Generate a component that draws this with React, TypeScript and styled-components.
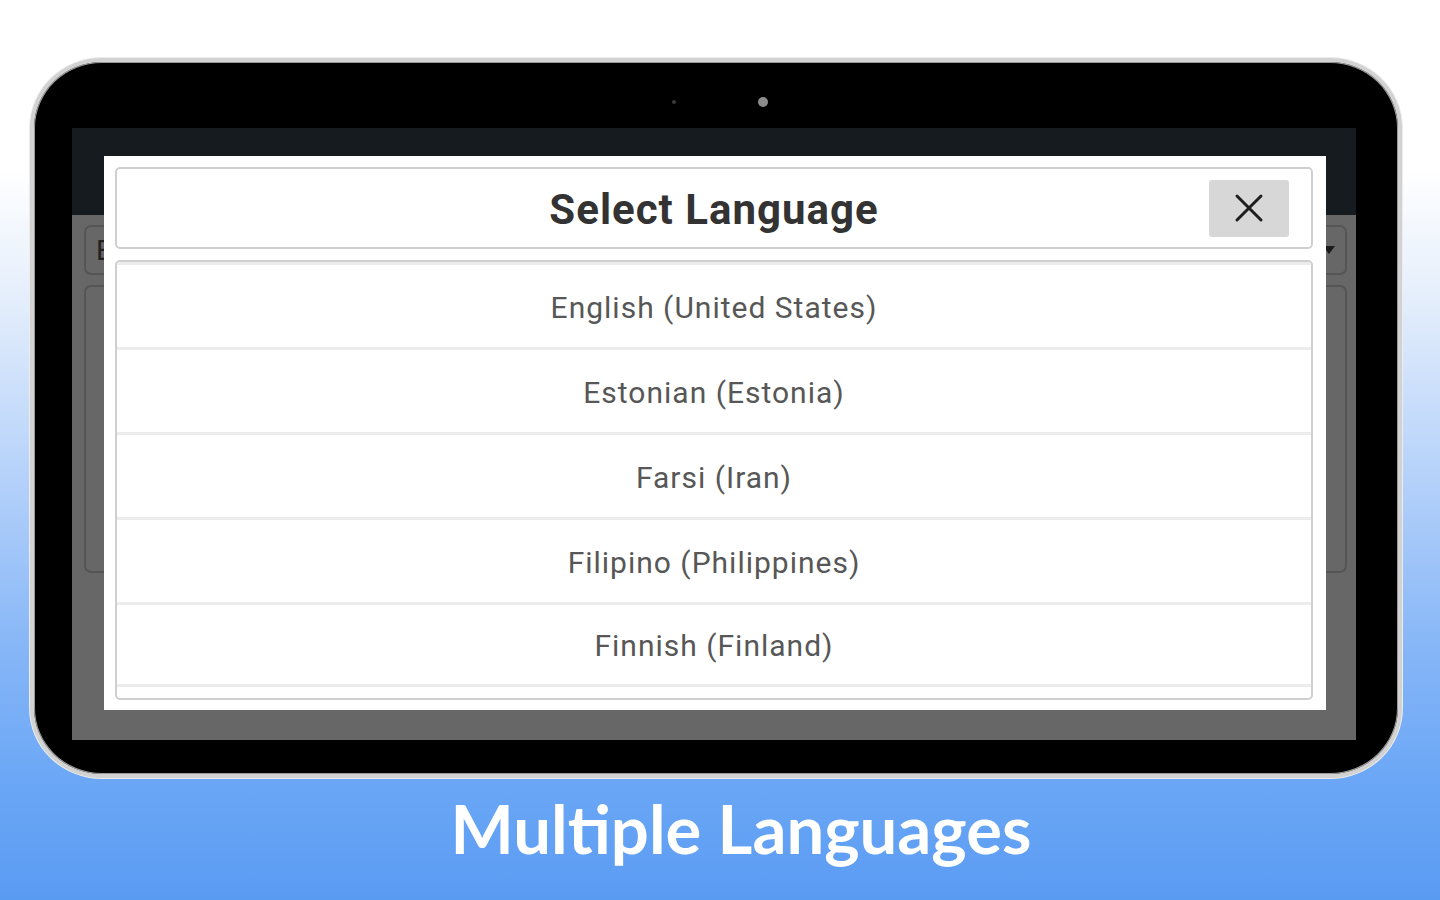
import React from "react";
import styled, { createGlobalStyle } from "styled-components";

const languages = [
  "English (United States)",
  "Estonian (Estonia)",
  "Farsi (Iran)",
  "Filipino (Philippines)",
  "Finnish (Finland)",
];

const App = () => {
  return (
    <Page>
      <GlobalStyle />
      <Tablet>
        <CameraRow>
          <Dot size={4} />
          <Dot size={10} />
        </CameraRow>
        <Screen>
          <AppBar />
          <AppBody>
            <Dropdown>
              <span>E</span>
              <Caret />
            </Dropdown>
            <Panel />
          </AppBody>
          <Dialog>
            <Header>
              <span />
              <Title>Select Language</Title>
              <CloseButton aria-label="close">
                <svg width="30" height="30" viewBox="0 0 30 30">
                  <path
                    d="M3 3 L27 27 M27 3 L3 27"
                    stroke="#1e1e1e"
                    strokeWidth="3"
                    strokeLinecap="round"
                  />
                </svg>
              </CloseButton>
            </Header>
            <List>
              {languages.map((lang) => (
                <Row key={lang}>{lang}</Row>
              ))}
            </List>
          </Dialog>
        </Screen>
      </Tablet>
      <Caption>Multiple Languages</Caption>
    </Page>
  );
};

export default App;

const GlobalStyle = createGlobalStyle`
  html, body {
    margin: 0;
    padding: 0;
  }
  body {
    font-family: Roboto, "Liberation Sans", sans-serif;
  }
  * {
    box-sizing: border-box;
  }
`;

const Page = styled.div`
  width: 1440px;
  height: 900px;
  overflow: hidden;
  padding: 58px 0 0 30px;
  background: linear-gradient(
    180deg,
    #ffffff 0px,
    #ffffff 170px,
    #e4eefc 300px,
    #b4d1fa 480px,
    #86b6f7 650px,
    #6ba7f6 780px,
    #5a9bf2 900px
  );
`;

const Tablet = styled.div`
  width: 1372px;
  height: 720px;
  background: #000;
  border: 4px solid #d2d2d2;
  box-shadow: inset 0 0 0 1px #9a9a9a, 0 0 0 1px #ececec;
  border-radius: 72px / 70px;
  padding: 1px 42px 34px 38px;
  display: flex;
  flex-direction: column;
`;

const CameraRow = styled.div`
  height: 65px;
  padding: 13px 0 0 12px;
  display: flex;
  justify-content: center;
  align-items: center;
  gap: 82px;
`;

const Dot = styled.div<{ size: number }>`
  width: ${(p) => p.size}px;
  height: ${(p) => p.size}px;
  border-radius: 50%;
  background: ${(p) => (p.size > 5 ? "#8c8c8c" : "#3a3a3a")};
`;

const Screen = styled.div`
  position: relative;
  width: 1284px;
  height: 612px;
  background: #676767;
  display: flex;
  flex-direction: column;
  overflow: hidden;
`;

const AppBar = styled.div`
  height: 87px;
  background: #151b1f;
`;

const AppBody = styled.div`
  flex: 1;
  padding: 10px 9px 0 12px;
  display: flex;
  flex-direction: column;
  gap: 10px;
`;

const Dropdown = styled.div`
  height: 50px;
  border: 2px solid #555;
  border-radius: 7px;
  display: flex;
  align-items: center;
  justify-content: space-between;
  padding: 0 10px;
  font-size: 28px;
  color: #222;
`;

const Caret = styled.div`
  width: 0;
  height: 0;
  border-left: 6px solid transparent;
  border-right: 6px solid transparent;
  border-top: 8px solid #1a1a1a;
`;

const Panel = styled.div`
  height: 288px;
  border: 2px solid #555;
  border-radius: 7px;
`;

const Dialog = styled.div`
  position: absolute;
  left: 32px;
  top: 28px;
  width: 1222px;
  height: 554px;
  background: #fff;
  padding: 11px 13px 10px 11px;
  display: flex;
  flex-direction: column;
  gap: 11px;
`;

const Header = styled.div`
  height: 82px;
  border: 2px solid #cfcfcf;
  border-radius: 5px;
  display: grid;
  grid-template-columns: 1fr auto 1fr;
  align-items: center;
`;

const Title = styled.h2`
  margin: 0;
  padding-top: 2px;
  font-family: Roboto, "Liberation Sans", sans-serif;
  font-weight: 700;
  font-size: 42px;
  letter-spacing: 1px;
  color: #333;
`;

const CloseButton = styled.button`
  justify-self: end;
  margin-right: 22px;
  width: 80px;
  height: 57px;
  border: none;
  border-radius: 3px;
  background: #d7d7d7;
  display: flex;
  align-items: center;
  justify-content: center;
  padding: 0;
`;

const List = styled.div`
  height: 440px;
  border: 2px solid #cfcfcf;
  border-radius: 5px;
  overflow: hidden;
`;

const Row = styled.div`
  height: 85px;
  border-top: 3px solid #ececec;
  display: flex;
  align-items: center;
  justify-content: center;
  padding-top: 2px;
  font-family: Roboto, "Liberation Sans", sans-serif;
  font-size: 30px;
  letter-spacing: 1px;
  color: #575757;
  &:last-child {
    border-bottom: 3px solid #ececec;
  }
`;

const Caption = styled.div`
  margin-top: 10px;
  padding-left: 42px;
  width: 1380px;
  text-align: center;
  font-family: Lato, "Open Sans", sans-serif;
  font-weight: 700;
  font-size: 67px;
  line-height: 80px;
  color: #fff;
`;
